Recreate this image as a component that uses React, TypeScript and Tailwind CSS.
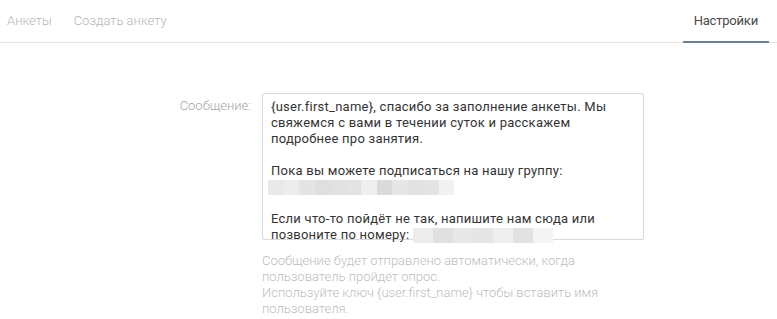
const blur1 = ['#e9e9e9', '#ededed', '#e4e4e4', '#dfdfdf', '#e1e1e1', '#e3e3e3', '#efefef', '#dadada', '#e6e6e6', '#e2e2e2', '#e4e4e4', '#f1f1f1']
const blur2 = ['#ececec', '#e0e0e0', '#e8e8e8', '#e5e5e5', '#efefef', '#e2e2e2', '#f4f4f4']

function Blur({ colors, w }: { colors: string[]; w: number }) {
  return (
    <span className="inline-flex align-middle h-[15px]">
      {colors.map((c, i) => (
        <span key={i} className="h-full" style={{ width: w, background: c }} />
      ))}
    </span>
  )
}

export default function App() {
  return (
    <div className="w-[777px] h-[319px] bg-white font-['Roboto',sans-serif] overflow-hidden">
      <div className="flex items-stretch h-[43px] border-b border-[#e3e3e3] pl-[7px] pr-[8px]">
        <div className="flex items-center gap-[22px] font-light text-[13px] text-[#b5b5b5]">
          <span>Анкеты</span>
          <span>Создать анкету</span>
        </div>
        <div className="ml-auto flex">
          <div className="relative flex items-center px-[11px] text-[13px] tracking-[-0.2px] text-[#4a4a4a]">
            Настройки
            <span className="absolute left-0 right-0 -bottom-px h-[2px] bg-[#6b8192]" />
          </div>
        </div>
      </div>

      <div className="flex mt-[50px]">
        <div className="w-[262px] pr-[11px] pt-[5px] text-right font-light text-[13px] leading-4 text-[#a8a8a8]">
          Сообщение:
        </div>
        <div className="flex flex-col">
          <div className="w-[382px] h-[147px] border border-[#d9d9d9] rounded-[2px] px-[8px] pt-[5px] text-[13px] leading-4 text-[#333] tracking-[0.25px]">
            <div>{'{user.first_name}'}, спасибо за заполнение анкеты. Мы свяжемся с вами в течении суток и расскажем подробнее про занятия.</div>
            <div className="h-4" />
            <div>Пока вы можете подписаться на нашу группу:</div>
            <div className="h-4 flex items-center -ml-[3px]"><Blur colors={blur1} w={15.5} /></div>
            <div className="h-4" />
            <div>Если что-то пойдёт не так, напишите нам сюда или</div>
            <div>позвоните по номеру: <Blur colors={blur2} w={20} /></div>
          </div>
          <div className="mt-[13px] w-[382px] font-light text-[13px] leading-4 text-[#bdbdbd]">
            <div>Сообщение будет отправлено автоматически, когда пользователь пройдет опрос.</div>
            <div>Используйте ключ {'{user.first_name}'} чтобы вставить имя пользователя.</div>
          </div>
        </div>
      </div>
    </div>
  )
}
